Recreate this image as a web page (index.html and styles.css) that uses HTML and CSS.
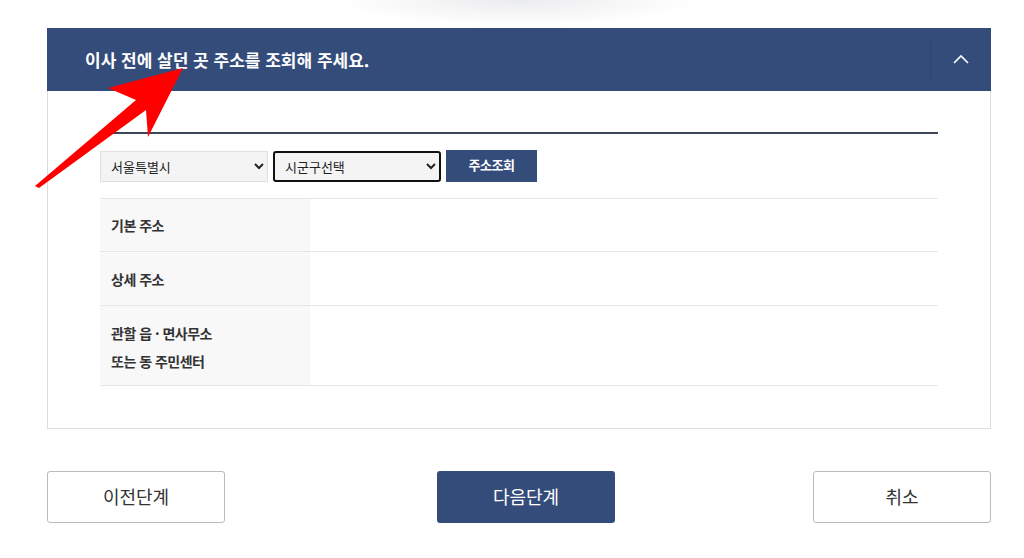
FILE: index.html
```html
<!DOCTYPE html>
<html lang="ko">
<head>
    <meta charset="UTF-8">
    <meta name="viewport" content="width=device-width, initial-scale=1.0">
    <title>주소 조회</title>
    <link rel="stylesheet" href="styles.css">
</head>
<body>
    <div id="wrapper">
        <div class="top-glow"><div class="glow"></div></div>

        <div class="panel">
            <div class="panel-head">
                <h2>이사 전에 살던 곳 주소를 조회해 주세요.</h2>
                <button class="toggle" aria-label="접기">
                    <svg width="16" height="10" viewBox="0 0 16 10">
                        <polyline points="1,9 8,2 15,9" fill="none" stroke="#ffffff" stroke-width="1.6"/>
                    </svg>
                </button>
            </div>
            <div class="panel-body">
                <div class="search-row">
                    <select class="sel sel-sido">
                        <option>서울특별시</option>
                    </select>
                    <select class="sel sel-sigungu">
                        <option>시군구선택</option>
                    </select>
                    <button class="btn-search">주소조회</button>
                </div>
                <table class="addr-table">
                    <tr>
                        <th>기본 주소</th>
                        <td></td>
                    </tr>
                    <tr class="mid">
                        <th>상세 주소</th>
                        <td></td>
                    </tr>
                    <tr class="tall">
                        <th>관할 읍 · 면사무소<br>또는 동 주민센터</th>
                        <td></td>
                    </tr>
                </table>
            </div>
        </div>

        <div class="actions">
            <button class="btn-line">이전단계</button>
            <button class="btn-main">다음단계</button>
            <button class="btn-line">취소</button>
        </div>

        <!-- annotation arrow -->
        <svg class="pointer" width="200" height="200" viewBox="0 0 200 200">
            <polygon points="183,68 108,88 136,100 35,186 39,188 146,110 148,137" fill="#ff0000"/>
        </svg>
    </div>
</body>
</html>
```

FILE: styles.css
```css
body {
    margin: 0;
    background: #ffffff;
    font-family: "Noto Sans CJK KR", "Noto Sans", sans-serif;
    color: #333333;
}

#wrapper {
    position: relative;
    width: 1024px;
    height: 558px;
    overflow: hidden;
}

.top-glow {
    height: 28px;
    display: flex;
    justify-content: center;
}

.glow {
    width: 360px;
    height: 26px;
    margin-left: 12px;
    background: radial-gradient(ellipse 50% 100% at 50% 0%, rgba(30, 40, 60, 0.09), rgba(30, 40, 60, 0) 100%);
}

.panel {
    margin-left: 47px;
    width: 944px;
}

.panel-head {
    height: 63px;
    background: #344c79;
    display: flex;
    align-items: center;
    justify-content: space-between;
}

.panel-head h2 {
    margin: 0 0 0 38px;
    color: #ffffff;
    font-size: 17px;
    font-weight: 700;
    letter-spacing: 0;
}

.toggle {
    width: 61px;
    height: 40px;
    background: none;
    border: none;
    border-left: 1px solid #2d4470;
    display: flex;
    align-items: center;
    justify-content: center;
    padding: 0 0 2px 0;
    cursor: pointer;
}

.panel-body {
    border: 1px solid #dddddd;
    border-top: none;
    padding: 41px 52px 42px 52px;
}

.search-row {
    border-top: 2px solid #3b4658;
    padding: 16px 0 16px 0;
    display: flex;
    align-items: center;
    gap: 5px;
}

.sel {
    width: 168px;
    height: 31px;
    font-family: inherit;
    font-size: 13px;
    color: #222222;
    background-color: #f4f4f4;
    padding: 0 6px;
}

.sel-sido {
    border: 1px solid #e0e0e0;
}

.sel-sigungu {
    border: 2px solid #111111;
    border-radius: 3px;
}

.btn-search {
    width: 91px;
    height: 32px;
    background: #344c79;
    color: #ffffff;
    border: none;
    font-family: inherit;
    font-size: 13px;
    font-weight: 700;
    letter-spacing: -0.5px;
    padding: 0 0 3px 0;
}

.addr-table {
    width: 100%;
    border-collapse: collapse;
}

.addr-table tr {
    border-top: 1px solid #e6e6e6;
    border-bottom: 1px solid #e6e6e6;
}

.addr-table th {
    width: 210px;
    height: 53px;
    background: #f8f8f8;
    text-align: left;
    padding: 0 0 0 11px;
    font-size: 14px;
    font-weight: 700;
    letter-spacing: -0.5px;
    color: #333333;
    line-height: 28px;
    box-sizing: border-box;
}

.addr-table .mid th {
    height: 54px;
}

.addr-table .tall th {
    height: 80px;
    padding-top: 2px;
}

.actions {
    margin: 42px 0 0 47px;
    width: 944px;
    display: flex;
    justify-content: space-between;
}

.actions button {
    width: 178px;
    height: 52px;
    border-radius: 3px;
    font-family: inherit;
    font-size: 18px;
    padding: 0 0 2px 0;
}

.btn-line {
    background: #ffffff;
    border: 1px solid #bbbbbb;
    color: #333333;
}

.btn-main {
    margin-left: 14px;
    background: #344c79;
    border: none;
    color: #ffffff;
}

.pointer {
    position: absolute;
    left: 0;
    top: 0;
}
```
